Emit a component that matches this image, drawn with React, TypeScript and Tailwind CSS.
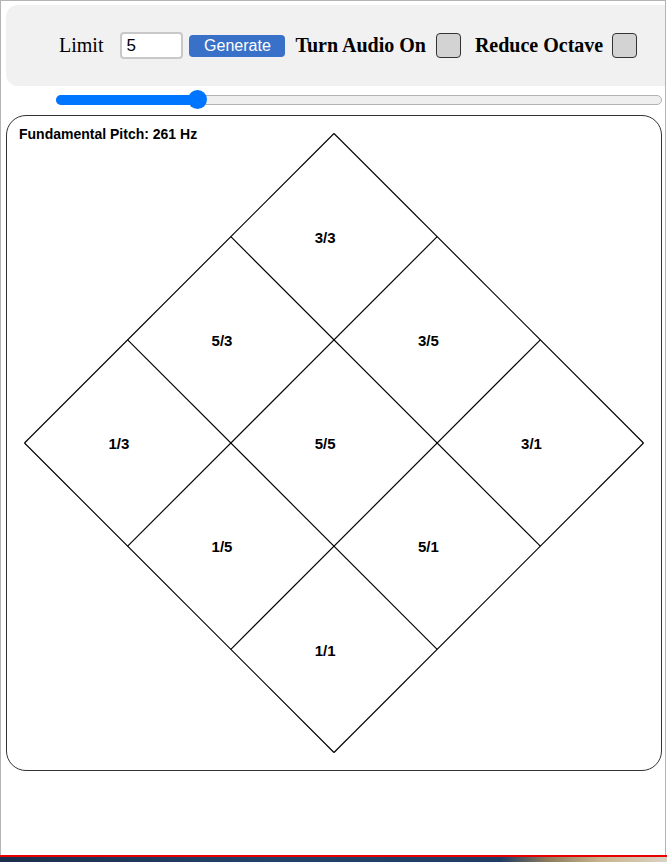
const CX = 327;
const CY = 327;
const R = 309.5;

// a runs left->top, b runs left->bottom
function pt(a: number, b: number) {
  return { x: CX - R + R * (a + b), y: CY + R * (b - a) };
}

const NUM = ["1", "5", "3"];
const DEN = ["3", "5", "1"];

function Lattice() {
  const lines = [];
  for (let k = 0; k <= 3; k++) {
    const p1 = pt(k / 3, 0);
    const p2 = pt(k / 3, 1);
    const q1 = pt(0, k / 3);
    const q2 = pt(1, k / 3);
    lines.push(<line key={"a" + k} x1={p1.x} y1={p1.y} x2={p2.x} y2={p2.y} stroke="#000" strokeWidth={1.15} />);
    lines.push(<line key={"b" + k} x1={q1.x} y1={q1.y} x2={q2.x} y2={q2.y} stroke="#000" strokeWidth={1.15} />);
  }
  const labels = [];
  for (let i = 0; i < 3; i++) {
    for (let j = 0; j < 3; j++) {
      const c = pt((i + 0.5) / 3, (j + 0.5) / 3);
      labels.push(
        <text
          key={i + "-" + j}
          x={c.x - 8.8}
          y={c.y + 6.3}
          textAnchor="middle"
          fontSize={15}
          fontWeight={700}
          fontFamily="'Liberation Sans', Arial, sans-serif"
          fill="#000"
        >
          {NUM[i]}/{DEN[j]}
        </text>
      );
    }
  }
  return (
    <svg width={654} height={654} viewBox="0 0 654 654" className="absolute left-0 top-0">
      <text x={12} y={23} fontSize={14} fontWeight={700} fontFamily="'Liberation Sans', Arial, sans-serif" fill="#000">
        Fundamental Pitch: 261 Hz
      </text>
      {lines}
      {labels}
    </svg>
  );
}

function Box() {
  return <span className="ml-[10px] w-[25px] h-[25px] bg-[#d3d3d3] border border-[#333] rounded-[4px] shrink-0" />;
}

export default function App() {
  return (
    <div className="w-[667px] h-[862px] flex flex-col bg-white overflow-hidden">
      <div className="h-[855px] w-[666px] border-l border-t border-r border-[#b4b4b4] pl-[5px] pt-[4px] flex flex-col">
        <div className="h-[81px] bg-[#f1f1f1] rounded-l-[12px] flex items-center pl-[53px] text-[20px] text-black font-['Liberation_Serif',serif]">
          <span className="relative top-[-1px]">Limit</span>
          <input
            type="text"
            value="5"
            readOnly
            className="ml-[17px] w-[63px] h-[27px] border-2 border-[#c8c8c8] rounded-[4px] bg-white pl-[4px] text-[17px] font-['Liberation_Sans',Arial,sans-serif] outline-none"
          />
          <button className="ml-[6px] w-[96px] h-[22px] bg-[#3a71c8] rounded-[4px] text-white text-[16px] leading-[22px] font-['Liberation_Sans',Arial,sans-serif]">
            Generate
          </button>
          <span className="ml-[10px] font-bold relative top-[-1px]">Turn Audio On</span>
          <Box />
          <span className="ml-[14px] font-bold relative top-[-1px]">Reduce Octave</span>
          <span className="ml-[9px] w-[25px] h-[25px] bg-[#d3d3d3] border border-[#333] rounded-[4px] shrink-0" />
        </div>

        <div className="mt-[4px] ml-[50px] w-[606px] h-[19px] flex items-center">
          <div className="relative w-full h-[10px] rounded-full bg-[#efefef] border border-[#b2b2b2]">
            <div className="absolute left-[-1px] top-[-1px] bottom-[-1px] w-[142px] bg-[#0075ff] rounded-l-full" />
            <div className="absolute left-[131px] top-[-6px] w-[19px] h-[19px] rounded-full bg-[#0075ff]" />
          </div>
        </div>

        <div className="relative mt-[6px] w-[656px] h-[656px] border border-[#333] rounded-[20px]">
          <Lattice />
        </div>
      </div>
      <div className="h-[2px] bg-[#e60000]" />
      <div className="flex-1 bg-[linear-gradient(to_right,#1c2f4c_0%,#22426a_40%,#1f3d63_75%,#8a7b5c_82%,#c8b48c_90%,#d9d2c4_100%)]" />
    </div>
  );
}
